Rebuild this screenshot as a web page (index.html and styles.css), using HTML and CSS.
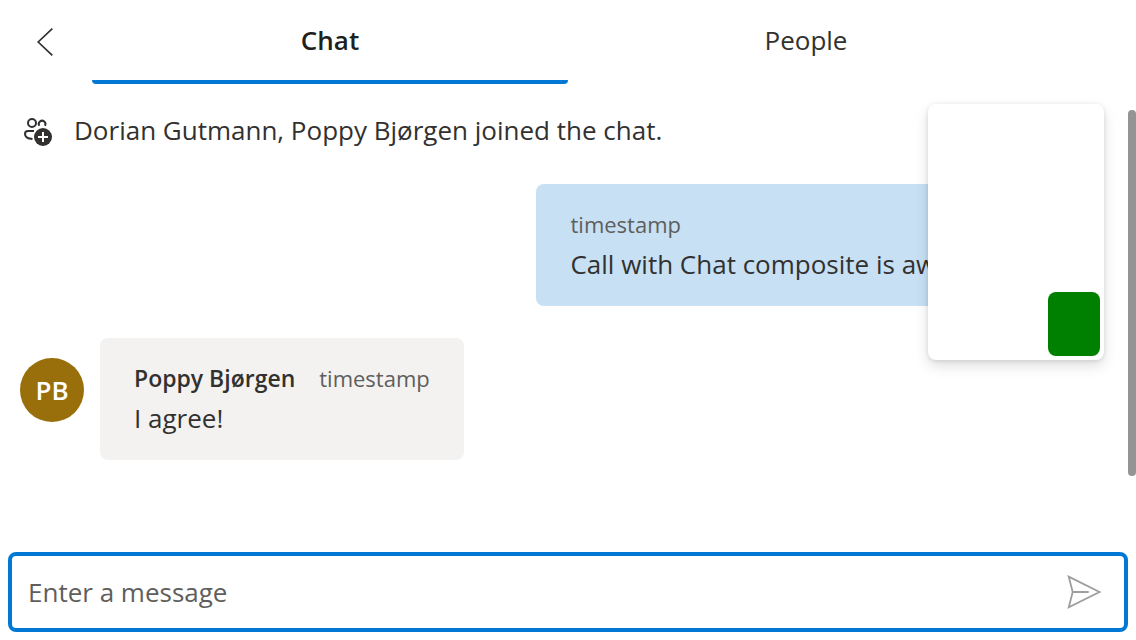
FILE: index.html
```html
<!DOCTYPE html>
<html lang="en">
<head>
<meta charset="utf-8">
<meta name="viewport" content="width=device-width, initial-scale=1">
<title>Chat</title>
<link rel="stylesheet" href="styles.css">
</head>
<body>
<div class="pane">
  <header class="tabs">
    <button class="back" type="button" aria-label="Back">
      <svg width="18" height="30" viewBox="0 0 18 30" fill="none" stroke="currentColor" stroke-width="1.7"><path d="M15.300 1.700 1.200 15l14.100 13.300"/></svg>
    </button>
    <button class="tab tab-active" type="button">Chat</button>
    <button class="tab" type="button">People</button>
  </header>

  <main class="thread">
    <div class="notice">
      <svg class="notice-icon" width="28" height="28" viewBox="0 0 28 28" fill="none" stroke="currentColor" stroke-width="2">
        <circle cx="8" cy="5" r="4"/>
        <path d="M15.300 7.800a3.300 3.300 0 1 1 5.600 0"/>
        <path d="M10 13H4a3 3 0 0 0-3 3c0 2.900 2.200 4.600 7.500 5"/>
        <circle cx="19" cy="19" r="9" fill="currentColor" stroke="none"/>
        <path d="M19 14v10M14 19h10" stroke="#fff"/>
      </svg>
      <p class="notice-text">Dorian Gutmann, Poppy Bjørgen joined the chat.</p>
    </div>

    <article class="bubble bubble-mine">
      <div class="meta"><span class="time">timestamp</span></div>
      <p>Call with Chat composite is awesome!</p>
    </article>

    <div class="incoming">
      <div class="avatar">PB</div>
      <article class="bubble">
        <div class="meta"><span class="author">Poppy Bjørgen</span><span class="time">timestamp</span></div>
        <p>I agree!</p>
      </article>
    </div>
    <div class="scroll-thumb"></div>
    <aside class="preview"><div class="preview-self"></div></aside>
  </main>

  <form class="composer">
    <input class="composer-input" type="text" placeholder="Enter a message" aria-label="Enter a message">
    <button class="send" type="button" aria-label="Send">
      <svg width="36" height="36" viewBox="0 0 36 36" fill="none" stroke="currentColor" stroke-width="1.8"><path d="M2.700 2.600 33.500 18 2.700 33.400 6.700 18ZM6.700 18h16"/></svg>
    </button>
  </form>
</div>
</body>
</html>
```

FILE: styles.css
```css
* { box-sizing: border-box; }

body {
  margin: 0;
  background: #fff;
  color: #323130;
  font-family: "Segoe UI", "Open Sans", "Noto Sans", sans-serif;
  font-size: 26px;
  line-height: 36px;
}

button, input { font: inherit; color: inherit; }
button { border: 0; padding: 0; background: none; cursor: pointer; }
p { margin: 0; }
svg { display: block; }

.pane {
  display: flex;
  flex-direction: column;
  min-height: 100vh;
}

.tabs {
  display: grid;
  grid-template-columns: 92px 1fr 1fr 92px;
  height: 84px;
}
.back { display: grid; place-items: center; }
.tab { border-bottom: 4px solid transparent; }
.tab-active {
  border-bottom-color: #0078d4;
  border-radius: 0 0 4px 4px;
  color: #201f1e;
  font-weight: 600;
}

.thread {
  position: relative;
  flex: 1;
  display: flex;
  flex-direction: column;
  align-items: flex-start;
  gap: 32px;
  padding: 28px 40px 32px 20px;
}

.notice {
  display: flex;
  align-items: center;
  gap: 22px;
  height: 40px;
  padding-left: 4px;
}
.notice-text { padding-bottom: 4px; }

.bubble {
  padding: 22px 34px 24px;
  border-radius: 8px;
  background: #f3f2f1;
}
.bubble-mine {
  align-self: flex-end;
  width: 52%;
  background: #c7e0f4;
}
.meta {
  display: flex;
  align-items: baseline;
  gap: 24px;
  padding-bottom: 4px;
}
.time { font-size: 22px; color: #605e5c; }
.author { font-size: 23px; font-weight: 600; }

.incoming {
  display: flex;
  align-items: flex-start;
  gap: 16px;
}
.avatar {
  display: grid;
  place-items: center;
  width: 64px;
  height: 64px;
  margin-top: 20px;
  border-radius: 50%;
  background: #986f0b;
  color: #fff;
  font-weight: 600;
}

.scroll-thumb {
  position: absolute;
  top: 26px;
  right: 0;
  width: 8px;
  height: 366px;
  border-radius: 4px;
  background: #949494;
}
.preview {
  position: absolute;
  top: 20px;
  right: 32px;
  display: flex;
  align-items: flex-end;
  justify-content: flex-end;
  width: 176px;
  height: 256px;
  padding: 4px;
  border-radius: 8px;
  background: #fff;
  box-shadow: 0 6px 14px rgba(0, 0, 0, .13), 0 1px 4px rgba(0, 0, 0, .11);
}
.preview-self {
  width: 52px;
  height: 64px;
  border-radius: 8px;
  background: #008000;
}

.composer {
  display: flex;
  align-items: center;
  height: 80px;
  margin: 0 8px 8px;
  padding: 0 22px 0 16px;
  border: 4px solid #0078d4;
  border-radius: 8px;
}
.composer-input {
  flex: 1;
  min-width: 0;
  padding: 0;
  border: 0;
  outline: 0;
  background: none;
}
.composer-input::placeholder { color: #605e5c; opacity: 1; }
.send { color: #a19f9d; }
```
